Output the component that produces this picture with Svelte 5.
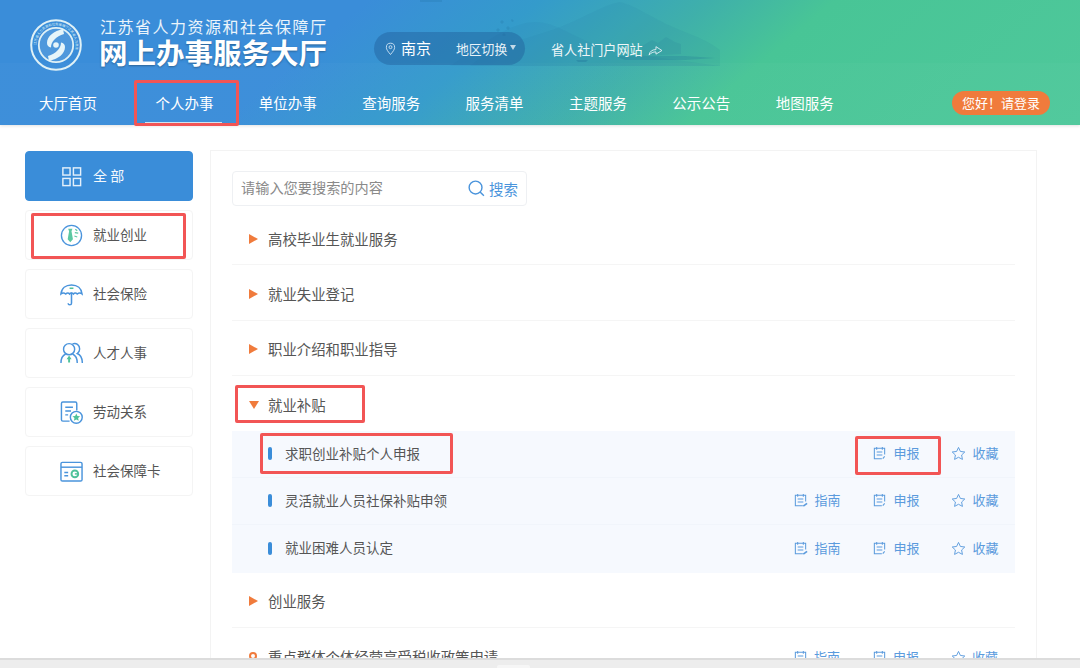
<script>
  const navItems = ['大厅首页', '个人办事', '单位办事', '查询服务', '服务清单', '主题服务', '公示公告', '地图服务'];
  const categories = [
    { name: '就业创业', icon: 'job' },
    { name: '社会保险', icon: 'umbrella' },
    { name: '人才人事', icon: 'people' },
    { name: '劳动关系', icon: 'doc' },
    { name: '社会保障卡', icon: 'card' },
  ];
  const services = [
    { title: '求职创业补贴个人申报', guide: false },
    { title: '灵活就业人员社保补贴申领', guide: true },
    { title: '就业困难人员认定', guide: true },
  ];
</script>

{#snippet formIcon(guide)}
  <svg class="act-icon" viewBox="0 0 16 16" fill="none" stroke="currentColor" stroke-width="1.100">
    <path d="M13.500 9V2.500h-11v11h8M5 1v3M11 1v3M5 6.500h6M5 9.500h6" />
    {#if guide}
      <path d="M11 14l4-3" stroke-width="1.800" />
    {:else}
      <path d="M13.500 11l-2 2.500" />
    {/if}
  </svg>
{/snippet}

{#snippet actions(guide)}
  <div class="actions">
    {#if guide}
      <span class="act">{@render formIcon(true)}<span class="act-label">指南</span></span>
    {/if}
    <span class="act">{@render formIcon(false)}<span class="act-label">申报</span></span>
    <span class="act">
      <svg class="act-icon" viewBox="0 0 16 16" fill="none" stroke="currentColor" stroke-width="1">
        <path d="M8 1.500l2 4.300 4.700.6-3.400 3.200.9 4.700L8 12l-4.200 2.300.9-4.700L1.300 6.400 6 5.800z" />
      </svg><span class="act-label">收藏</span>
    </span>
  </div>
{/snippet}

{#snippet catIcon(name)}
  {#if name === 'job'}
    <svg class="cat-icon" viewBox="0 0 24 24" fill="none">
      <circle cx="12" cy="12" r="10.500" stroke="#4a94dc" stroke-width="1.400" />
      <path d="M8.500 5h4.500l-1 2.500L13.500 16 10.700 19 8 16l1.500-8.500z" fill="#5cc8a2" />
      <path d="M16 5.500l2 1.500M15.500 9l3.500.5M15 12.500l3 1" stroke="#5cc8a2" stroke-width="1.200" />
    </svg>
  {:else if name === 'umbrella'}
    <svg class="cat-icon" viewBox="0 0 24 24" fill="none" stroke="#4a94dc" stroke-width="1.600">
      <path d="M1 11.500C1.500 5.500 6 2 12 2s10.500 3.500 11 9.500c-1.500-1.300-3.500-1.300-5 0-1.300-1.300-3-1.300-4 0-1.300-1.300-3-1.300-4 0-1-1.300-2.700-1.300-4 0-1.500-1.300-3.500-1.300-5 0z" />
      <path d="M12 10v11c0 2.400-3.500 2.400-3.500 0" />
      <path d="M10 5.500h4" stroke="#4fc29a" />
    </svg>
  {:else if name === 'people'}
    <svg class="cat-icon" viewBox="0 0 24 24" fill="none" stroke="#4a94dc" stroke-width="1.500">
      <circle cx="9.500" cy="7.500" r="5.800" />
      <path d="M1 22c0-5 2.500-8.500 5-9.500M18 22c0-5-2.500-8.500-5-9.500" />
      <path d="M13 2c4-1.500 7.500 1 7.500 5.300 0 2-1 3.700-2.500 4.700 3.500 1.500 5.300 5 5.300 10" />
      <path d="M9.500 14l2.600 4h-1.600v3.500h-2V18H6.900z" fill="#4fc29a" stroke="none" />
    </svg>
  {:else if name === 'doc'}
    <svg class="cat-icon" viewBox="0 0 24 24" fill="none" stroke="#4a94dc" stroke-width="1.500">
      <path d="M10 21H3A1.500 1.500 0 0 1 1.500 19.500V2.500A1.500 1.500 0 0 1 3 1h13a1.500 1.500 0 0 1 1.500 1.500V10" />
      <path d="M5.500 6.500h8M5.500 10.500h6M5.500 14.500h3" />
      <circle cx="17" cy="17" r="6.200" fill="#fff" />
      <path d="M17 13l1.200 2.600 2.800.3-2.100 1.900.6 2.800-2.500-1.400-2.500 1.400.6-2.800-2.100-1.900 2.800-.3z" fill="#4fc29a" stroke="none" />
    </svg>
  {:else}
    <svg class="cat-icon" viewBox="0 0 24 24" fill="none" stroke="#4a94dc" stroke-width="1.500">
      <rect x="1" y="2.500" width="22" height="19.500" rx="1.500" />
      <path d="M1 7.500h22" />
      <path d="M4.500 13h4M4.500 16.500h4" />
      <circle cx="15.500" cy="14.500" r="3.500" stroke="#4fc29a" stroke-width="2" />
      <path d="M15.500 14.500h4" stroke="#4fc29a" stroke-width="1.500" />
    </svg>
  {/if}
{/snippet}

<div class="page">
  <header class="header">
    <svg class="scenery" viewBox="0 0 300 66" fill="#1d6a96">
      <path opacity=".07" d="M50 66C80 40 110 40 145 25c20-8 38-20 55-23 15 3 35 18 60 28 18 7 30 12 40 20v16z" />
      <path opacity=".07" d="M30 66C60 46 90 22 115 22c25 0 45 22 85 30 30 5 60 8 100 14z" />
      <path opacity=".18" d="M0 0h22v2H0z" />
      <path opacity=".2" d="M82 20l2 2-2 2-2-2zM88 26l2 2-2 2-2-2zM78 28l2 2-2 2-2-2zM92 19l2 2-2 1-1-2zM84 33l2 2-2 1-2-1z" />
      <path opacity=".12" d="M222 46l10-6 6 3 8-6 9 5 6 2v10l-39 2z" />
      <path opacity=".22" d="M195 56h70l30 2-30 2h-60z" />
      <path opacity=".3" d="M156 60h12l-2 2h-8z" />
    </svg>

    <div class="top">
      <svg class="logo" viewBox="0 0 52 52" fill="none">
        <circle cx="26" cy="26" r="24.800" stroke="#dff1f6" stroke-width="2" />
        <circle cx="26" cy="26" r="17.200" stroke="#dff1f6" stroke-width="1.800" fill="#fff" fill-opacity=".1" />
        <defs><path id="ring" d="M26 26m-19.600 0a19.600 19.600 0 1 1 39.200 0a19.600 19.600 0 1 1-39.200 0" /></defs>
        <text class="logo-text"><textPath href="#ring">江苏省人力资源和社会保障厅江苏省人力资源</textPath></text>
        <path d="M33 10c-9 2-16 7-16 14 0 2.500 1.500 4 4 4.500 0-6 5-11 13-13.500zM19 42c9-2 16-7 16-14 0-2.500-1.500-4-4-4.500 0 6-5 11-13 13.500z" fill="#e6f5f9" />
        <circle cx="26" cy="26" r="2.800" fill="#e6f5f9" />
      </svg>
      <div class="brand">
        <div class="sub">江苏省人力资源和社会保障厅</div>
        <div class="title">网上办事服务大厅</div>
      </div>
      <div class="region">
        <svg class="pin" viewBox="0 0 12 14" fill="none" stroke="#cfe4f5" stroke-width="1">
          <path d="M6 13C3 9.500 1.500 7.500 1.500 5.200a4.500 4.500 0 0 1 9 0C10.500 7.500 9 9.500 6 13z" />
          <circle cx="6" cy="5" r="1.600" />
        </svg>
        <span class="city">南京</span>
        <span class="switch">地区切换</span>
        <span class="caret"></span>
      </div>
      <div class="portal">
        <span class="act-label">省人社门户网站</span>
        <svg class="share" viewBox="0 0 16 12" fill="none" stroke="#e3f0f5" stroke-width="1">
          <path d="M1 11c.500-4 3.500-6 7.500-6V1.800L15 6l-6.500 4V7.500C5.500 7.500 3 8.500 1 11z" />
        </svg>
      </div>
    </div>

    <nav class="nav">
      {#each navItems as item, i}
        <span class="nav-item" class:active={i === 1}>{item}</span>
      {/each}
      <span class="login">您好！请登录</span>
    </nav>
  </header>

  <div class="body">
    <aside class="side">
      <div class="cat all">
        <svg class="cat-icon" viewBox="0 0 24 24" fill="none" stroke="#e3f0fb" stroke-width="1.500">
          <rect x="3" y="3" width="7.500" height="7.500" />
          <rect x="14" y="3" width="7.500" height="7.500" />
          <rect x="3" y="14" width="7.500" height="7.500" />
          <rect x="14" y="14" width="7.500" height="7.500" />
        </svg>
        <span class="act-label">全 部</span>
      </div>
      {#each categories as cat}
        <div class="cat">
          {@render catIcon(cat.icon)}
          <span class="act-label">{cat.name}</span>
        </div>
      {/each}
    </aside>

    <main class="main">
      <div class="search">
        <input placeholder="请输入您要搜索的内容" aria-label="搜索" />
        <svg class="search-icon" viewBox="0 0 18 18" fill="none" stroke="#4a94dc" stroke-width="1.500">
          <circle cx="8" cy="8" r="6.800" />
          <path d="M12.800 12.800l4 4" />
        </svg>
        <span class="search-btn">搜索</span>
      </div>

      <div class="row"><span class="arrow"></span><span class="row-label">高校毕业生就业服务</span></div>
      <div class="row"><span class="arrow"></span><span class="row-label">就业失业登记</span></div>
      <div class="row"><span class="arrow"></span><span class="row-label">职业介绍和职业指导</span></div>
      <div class="row open"><span class="arrow down"></span><span class="row-label">就业补贴</span></div>

      <div class="services">
        {#each services as s}
          <div class="service">
            <span class="mark"></span>
            <span class="service-name act-label">{s.title}</span>
            {@render actions(s.guide)}
          </div>
        {/each}
      </div>

      <div class="row"><span class="arrow"></span><span class="row-label">创业服务</span></div>
      <div class="row last">
        <span class="ring"></span>
        <span class="row-label">重点群体个体经营享受税收政策申请</span>
        {@render actions(true)}
      </div>
    </main>
  </div>

  <div class="mark-box box-nav"></div>
  <div class="mark-box box-cat"></div>
  <div class="mark-box box-row"></div>
  <div class="mark-box box-service"></div>
  <div class="mark-box box-action"></div>

  <div class="status-bar"><span class="status-tab"></span></div>
</div>

<style>
  :global(body) {
    background: #fff;
  }

  .page {
    position: relative;
    height: 668px;
    overflow: hidden;
    font-family: 'Noto Sans CJK SC', 'Noto Sans', sans-serif;
    color: #555;
    background: #fff;
  }

  /* Noto CJK sits about 1px lower than the reference font */
  .act-label {
    margin-bottom: 2px;
  }

  .row-label {
    margin-bottom: 1px;
  }

  .header {
    position: relative;
    height: 125px;
    background:
      linear-gradient(180deg, transparent 63px, rgba(255, 255, 255, 0.02) 63px),
      linear-gradient(140deg, #3a8dd9 30%, #349bcb 44%, #3fb0aa 58%, #48c596 68%, #4fc89b 100%);
    box-shadow: 0 1px 3px rgba(0, 0, 0, 0.12);
    color: #fff;
  }

  .scenery {
    position: absolute;
    left: 420px;
    top: 0;
    width: 300px;
    height: 66px;
  }

  .top {
    position: relative;
    display: flex;
    align-items: flex-start;
    height: 80px;
    padding-left: 30px;
    box-sizing: border-box;
  }

  .logo {
    width: 52px;
    height: 52px;
    margin-top: 19px;
    flex: none;
  }

  .logo-text {
    font-size: 3.300px;
    fill: #dff1f6;
  }

  .brand {
    width: 275px;
    margin-left: 17px;
    padding-top: 16px;
    flex: none;
  }

  .sub {
    padding-left: 1px;
    font-size: 16px;
    line-height: 20px;
    letter-spacing: 1.500px;
    color: #eaf4fb;
    white-space: nowrap;
  }

  .title {
    margin-top: 1px;
    font-size: 28.500px;
    font-weight: 700;
    line-height: 30px;
    white-space: nowrap;
    text-shadow: 0 1px 2px rgba(0, 0, 0, 0.3);
  }

  .region {
    display: flex;
    align-items: center;
    width: 151px;
    height: 33px;
    margin-top: 32px;
    padding-left: 11px;
    box-sizing: border-box;
    border-radius: 17px;
    background: rgba(30, 90, 150, 0.42);
    flex: none;
  }

  .pin {
    width: 11px;
    height: 14px;
    margin-right: 5px;
  }

  .city {
    width: 55px;
    margin-bottom: 2px;
    font-size: 15px;
  }

  .switch {
    margin-bottom: 1px;
    font-size: 12.800px;
    color: #e8f2f8;
  }

  .caret {
    margin: 0 0 2px 3px;
    border: 3.500px solid transparent;
    border-top: 5px solid #c3d9e8;
    border-bottom: 0;
  }

  .portal {
    display: flex;
    align-items: center;
    height: 33px;
    margin: 34px 0 0 26px;
    font-size: 13.100px;
    color: #eef6f8;
  }

  .share {
    width: 15px;
    height: 11px;
    margin-left: 5px;
  }

  .nav {
    position: relative;
    display: flex;
    align-items: center;
    gap: 45.400px;
    height: 45px;
    padding: 0 30px 0 39px;
  }

  .nav-item {
    position: relative;
    font-size: 14.500px;
    line-height: 45px;
    white-space: nowrap;
  }

  .nav-item:first-child {
    margin-right: 13px;
  }

  .nav-item.active::after {
    content: '';
    position: absolute;
    left: -10px;
    right: -9px;
    bottom: 1px;
    height: 2px;
    background: #cfe3f2;
  }

  .login {
    margin-left: auto;
    padding: 0 10px;
    font-size: 13px;
    line-height: 24px;
    border-radius: 12px;
    background: #f07b3c;
    white-space: nowrap;
  }

  .body {
    display: flex;
    align-items: flex-start;
    gap: 17px;
    padding: 25px 0 0 25px;
  }

  .side {
    display: flex;
    flex-direction: column;
    gap: 9px;
    width: 168px;
    padding-top: 1px;
    flex: none;
  }

  .cat {
    display: flex;
    align-items: center;
    gap: 10px;
    height: 50px;
    padding-left: 34px;
    box-sizing: border-box;
    border: 1px solid #f4f4f4;
    border-radius: 4px;
    font-size: 13.500px;
    color: #555;
    background: #fff;
  }

  .cat.all {
    border-color: #3a8dd9;
    background: #3a8dd9;
    color: #f2f8fd;
    font-size: 14px;
  }

  .cat-icon {
    width: 23px;
    height: 23px;
    flex: none;
  }

  .main {
    width: 827px;
    height: 600px;
    padding: 20px 21px 0;
    box-sizing: border-box;
    border: 1px solid #f3f3f3;
    flex: none;
  }

  .search {
    display: flex;
    align-items: center;
    width: 295px;
    height: 35px;
    margin-bottom: 4px;
    padding: 0 8px;
    box-sizing: border-box;
    border: 1px solid #eef0f3;
    border-radius: 4px;
  }

  .search input {
    flex: 1;
    min-width: 0;
    margin-bottom: 3px;
    padding: 0;
    border: 0;
    outline: 0;
    font: inherit;
    font-size: 14.200px;
    background: transparent;
  }

  .search input::placeholder {
    color: #8a8a8a;
    opacity: 1;
  }

  .search-icon {
    width: 17px;
    height: 17px;
    margin-right: 4px;
  }

  .search-btn {
    font-size: 14.500px;
    color: #4a94dc;
  }

  .row {
    position: relative;
    display: flex;
    align-items: center;
    height: 55.400px;
    padding: 3px 17px 0;
    box-sizing: border-box;
    border-bottom: 1px solid #f5f5f5;
    font-size: 14.400px;
    color: #555;
  }

  .row.open {
    height: 54.400px;
    border-bottom: 0;
  }

  .arrow {
    width: 0;
    height: 0;
    margin-right: 10px;
    border-left: 9px solid #f07b3c;
    border-top: 5px solid transparent;
    border-bottom: 5px solid transparent;
    flex: none;
  }

  .arrow.down {
    margin-right: 9px;
    border-top: 8px solid #f07b3c;
    border-left: 5px solid transparent;
    border-right: 5px solid transparent;
    border-bottom: 0;
  }

  .ring {
    width: 4px;
    height: 4px;
    margin: 0 11px 3px 0;
    border: 2px solid #f07b3c;
    border-radius: 50%;
    flex: none;
  }

  .row.last {
    border-bottom: 0;
    padding-top: 3px;
  }

  .services {
    height: 142px;
    background: #f6f9fe;
  }

  .service {
    display: flex;
    align-items: center;
    height: 47px;
    padding: 0 16.500px 0 36px;
    box-sizing: border-box;
    font-size: 13.500px;
    border-bottom: 1px solid #f1f5fb;
  }

  .service:last-child {
    border-bottom: 0;
  }

  .mark {
    width: 4px;
    height: 13px;
    margin-right: 13px;
    border-radius: 2px;
    background: #3a8dd9;
  }

  .service-name {
    color: #555;
  }

  .actions {
    display: flex;
    gap: 32px;
    margin-left: auto;
    font-size: 13px;
    color: #5b9bdd;
  }

  .act {
    display: flex;
    align-items: center;
    gap: 6px;
    white-space: nowrap;
  }

  .act-icon {
    width: 15px;
    height: 15px;
    flex: none;
  }

  .mark-box {
    position: absolute;
    box-sizing: border-box;
    border: 3px solid #f25555;
    border-radius: 2px;
    pointer-events: none;
  }

  .box-nav {
    left: 134px;
    top: 80px;
    width: 105px;
    height: 46px;
  }

  .box-cat {
    left: 31px;
    top: 213px;
    width: 155px;
    height: 46px;
  }

  .box-row {
    left: 235px;
    top: 385px;
    width: 130px;
    height: 38px;
  }

  .box-service {
    left: 260px;
    top: 433px;
    width: 193px;
    height: 41px;
  }

  .box-action {
    left: 855px;
    top: 436px;
    width: 86px;
    height: 39px;
  }

  .status-bar {
    position: absolute;
    left: 0;
    right: 0;
    bottom: 0;
    height: 10px;
    box-sizing: border-box;
    border-top: 2px solid #dcdcdc;
    background: #ededed;
  }

  .status-tab {
    position: absolute;
    left: 497px;
    top: 5px;
    width: 33px;
    height: 4px;
    border-radius: 2px 2px 0 0;
    background: #f6f6f6;
  }
</style>
